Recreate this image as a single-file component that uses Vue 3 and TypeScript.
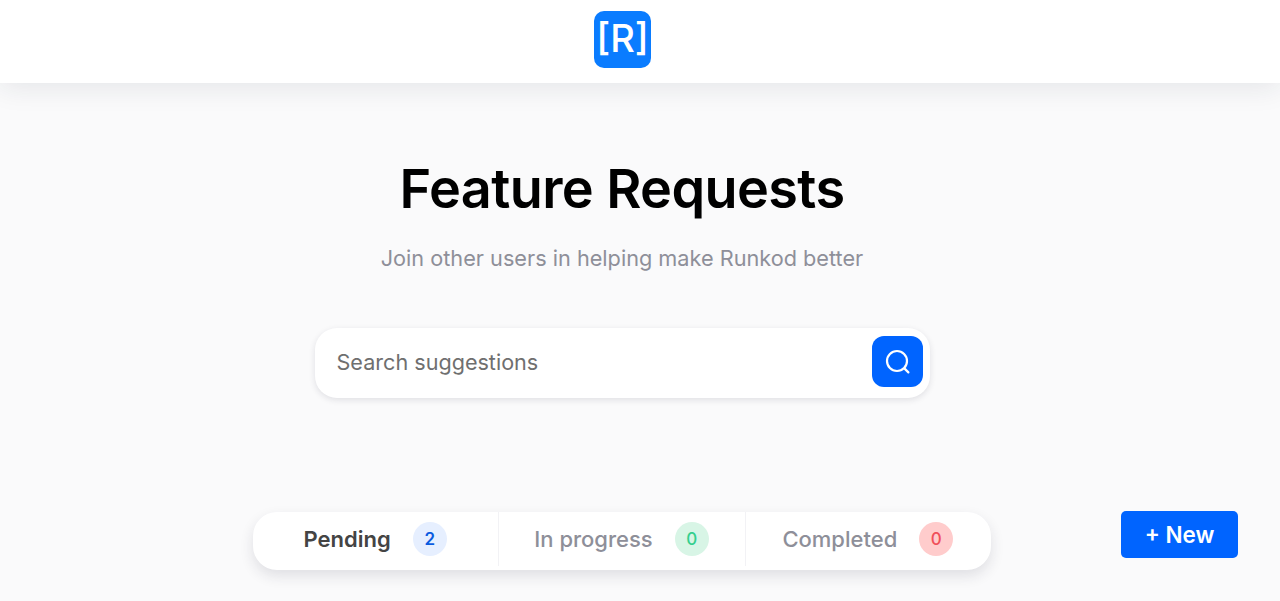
<template>
  <div class="page">
    <header class="topbar">
      <div class="logo">[R]</div>
    </header>

    <main class="content">
      <h1 class="title">Feature Requests</h1>
      <p class="subtitle">Join other users in helping make Runkod better</p>

      <form class="search" @submit.prevent>
        <input class="search-input" type="text" placeholder="Search suggestions" />
        <button class="search-btn" type="submit" aria-label="Search">
          <svg width="28" height="28" viewBox="0 0 28 28" fill="none" stroke="#fff" stroke-width="2.2" stroke-linecap="round">
            <circle cx="13" cy="13" r="10" />
            <path d="M20.6 20.6 L24.4 24.4" />
          </svg>
        </button>
      </form>

      <div class="toolbar">
        <div class="tabs">
          <div v-for="tab in tabs" :key="tab.label" class="tab" :class="[tab.tone, { active: tab.active }]">
            <span class="tab-label">{{ tab.label }}</span>
            <span class="tab-count">{{ tab.count }}</span>
          </div>
        </div>
        <button class="new-btn" type="button">+ New</button>
      </div>
    </main>
  </div>
</template>

<script setup lang="ts">
interface Tab {
  label: string;
  count: number;
  tone: string;
  active?: boolean;
}

const tabs: Tab[] = [
  { label: 'Pending', count: 2, tone: 'blue', active: true },
  { label: 'In progress', count: 0, tone: 'green' },
  { label: 'Completed', count: 0, tone: 'red' },
];
</script>

<style>
html,
body {
  margin: 0;
  height: 100%;
  overflow: hidden;
  background: #fafafb;
}
</style>

<style scoped>
.page {
  width: 1244px;
  font-family: Inter, 'Liberation Sans', sans-serif;
}

.topbar {
  width: 1280px;
  height: 83px;
  box-sizing: border-box;
  padding: 11px 35px 0 0;
  display: flex;
  justify-content: center;
  background: #fff;
  box-shadow: 0 4px 28px rgba(30, 35, 60, 0.1);
  position: relative;
}

.logo {
  width: 57px;
  height: 57px;
  border-radius: 10px;
  background: #0a7cff;
  color: #fff;
  font-size: 38px;
  font-weight: 500;
  line-height: 55px;
  text-align: center;
}

.content {
  display: flex;
  flex-direction: column;
  align-items: center;
}

.title {
  margin: 72px 0 0;
  font-size: 54px;
  line-height: 68px;
  font-weight: 600;
  letter-spacing: -0.6px;
  color: #000;
}

.subtitle {
  margin: 20px 0 0;
  font-size: 21.7px;
  line-height: 30px;
  color: #8e8f99;
}

.search {
  margin-top: 55px;
  width: 615px;
  height: 70px;
  box-sizing: border-box;
  padding: 8px 6.5px 11px 22px;
  display: flex;
  align-items: center;
  background: #fff;
  border-radius: 22px;
  box-shadow: 0 2px 6px rgba(30, 35, 60, 0.12);
}

.search-input {
  flex: 1;
  min-width: 0;
  border: 0;
  outline: 0;
  padding: 0;
  background: transparent;
  font-family: inherit;
  font-size: 21.6px;
  color: #6f6f6f;
}

.search-input::placeholder {
  color: #6f6f6f;
  opacity: 1;
}

.search-btn {
  width: 51px;
  height: 51px;
  padding: 0;
  border: 0;
  border-radius: 12px;
  background: #0064ff;
  display: flex;
  align-items: center;
  justify-content: center;
}

.toolbar {
  margin-top: 113px;
  width: 100%;
  display: grid;
  grid-template-columns: 1fr auto 1fr;
  align-items: start;
}

.tabs {
  grid-column: 2;
  display: flex;
  width: 738px;
  height: 58px;
  margin-top: 1px;
  background: #fff;
  border-radius: 24px;
  box-shadow: 0 6px 14px rgba(30, 35, 60, 0.12);
}

.tab {
  flex: 1;
  display: flex;
  align-items: center;
  justify-content: center;
  gap: 22px;
  border-left: 1px solid #f2f2f5;
  margin-bottom: 4px;
  padding: 0 1px 1px 0;
  font-size: 22px;
  font-weight: 500;
  color: #8e8f99;
}

.tab:first-child {
  border-left: 0;
}

.tab.active {
  color: #444;
  font-weight: 600;
}

.tab-count {
  width: 34px;
  height: 34px;
  border-radius: 50%;
  display: flex;
  align-items: center;
  justify-content: center;
  font-size: 17px;
  font-weight: 500;
}

.blue .tab-count {
  background: #e6efff;
  color: #0a5be0;
  font-weight: 600;
}

.green .tab-count {
  background: #d8f5e6;
  color: #35cf8e;
}

.red .tab-count {
  background: #ffcccc;
  color: #f0505a;
}

.new-btn {
  grid-column: 3;
  justify-self: end;
  margin-right: 6px;
  width: 117px;
  height: 47px;
  border: 0;
  border-radius: 5px;
  background: #0064ff;
  color: #fff;
  font-family: inherit;
  font-size: 22.5px;
  font-weight: 600;
}
</style>
